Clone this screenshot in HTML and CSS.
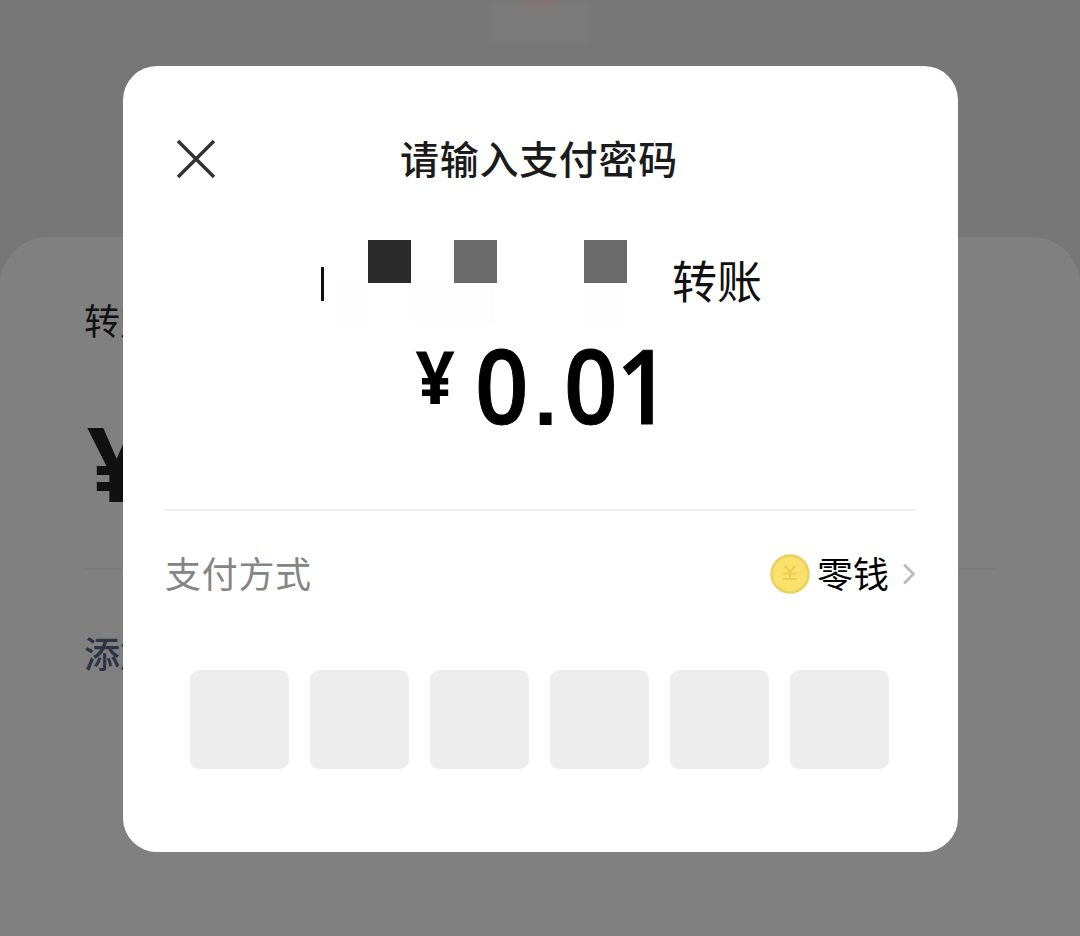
FILE: index.html
```html
<!DOCTYPE html>
<html lang="zh-CN">
<head>
<meta charset="utf-8">
<title>请输入支付密码</title>
<link rel="stylesheet" href="styles.css">
</head>
<body>
<main class="screen">
  <section class="backdrop" aria-hidden="true">
    <div class="recipient"><span class="avatar"></span></div>
    <div class="sheet">
      <div class="sheet-label">转账</div>
      <div class="sheet-amount">¥</div>
      <div class="sheet-note">添加</div>
    </div>
  </section>
  <section class="dialog" role="dialog">
    <header class="head">
      <svg class="close" viewBox="0 0 40 40"><path d="M2 2 38 38M38 2 2 38"/></svg>
      <h1 class="title">请输入支付密码</h1>
    </header>
    <div class="payee">
      <span class="stroke"></span>
      <span class="block dark"></span>
      <span class="block second"></span>
      <span class="block third"></span>
      <span class="action">转账</span>
    </div>
    <div class="amount">
      <span class="currency">¥</span>
      <span class="digit">0</span><span class="point">.</span><span class="digit zero">0</span><span class="digit one">1</span>
    </div>
    <div class="method">
      <span class="method-label">支付方式</span>
      <span class="wallet">
        <svg class="coin" viewBox="0 0 40 40"><circle cx="20" cy="20" r="18.500" fill="#fae06c" stroke="#ebd05c" stroke-width="2.500"/><path d="m15 12 5 6 5-6M13.500 19.500h13M13.500 25h13M20 18v7" fill="none" stroke="#eccb4e" stroke-width="2"/></svg>
        <span class="wallet-name">零钱</span>
        <svg class="chevron" viewBox="0 0 14 22"><path d="m2 1.500 9.500 9.500L2 20.500"/></svg>
      </span>
    </div>
    <div class="password">
      <span class="cell"></span><span class="cell"></span><span class="cell"></span><span class="cell"></span><span class="cell"></span><span class="cell"></span>
    </div>
  </section>
</main>
</body>
</html>
```
FILE: styles.css
```css
* { box-sizing: border-box; }
body {
  margin: 0;
  font-family: "Noto Sans CJK SC", sans-serif;
  color: #111;
}
.screen {
  display: grid;
  width: 1080px;
  height: 936px;
  overflow: hidden;
  background: #777;
}
.backdrop, .dialog { grid-area: 1 / 1; }
.backdrop { display: flex; flex-direction: column; }
.recipient { display: flex; justify-content: center; height: 237px; }
.avatar {
  width: 104px;
  height: 44px;
  background: radial-gradient(ellipse 30px 11px at 50% 0, #917370, #7a7a7a);
  filter: blur(3px);
}
.sheet {
  flex: 1;
  padding: 57px 84px 0;
  background: #808080;
  border-radius: 48px 48px 0 0;
}
.sheet-label { font-size: 36px; line-height: 50px; }
.sheet-amount {
  height: 225px;
  padding: 66px 0 0 3px;
  font: 700 104px/104px "Open Sans", sans-serif;
  border-bottom: 1px solid #7c7c7c;
}
.sheet-note {
  padding-top: 58px;
  font-size: 36px;
  font-weight: 500;
  line-height: 50px;
  color: #2c3344;
}
.dialog {
  width: 835px;
  height: 786px;
  margin: 66px 0 0 122.500px;
  padding: 64px 41.500px 0;
  background: #fff;
  border-radius: 34px;
}
.head {
  display: grid;
  grid-template-columns: 60px 1fr 60px;
  align-items: center;
  height: 54px;
  padding: 0 14px 0 12px;
}
.close { width: 40px; height: 40px; margin-top: 4px; }
.close path { fill: none; stroke: #333; stroke-width: 3.500; }
.title {
  margin: 0;
  text-align: center;
  font-size: 39px;
  font-weight: 500;
  line-height: 54px;
  letter-spacing: 0.700px;
  color: #1b1b1b;
}
.payee {
  display: flex;
  height: 86px;
  margin-top: 56px;
  padding-left: 157px;
  background:
    linear-gradient(#fdfdfd, #fdfdfd) 172px 46px / 32px 38px no-repeat,
    linear-gradient(#fdfdfd, #fdfdfd) 251px 46px / 80px 38px no-repeat,
    linear-gradient(#fdfdfd, #fdfdfd) 420px 46px / 40px 38px no-repeat;
}
.stroke { width: 3px; height: 34px; margin-top: 27px; background: #111; }
.block { width: 43px; height: 43px; background: #6b6b6b; }
.dark { margin-left: 44px; background: #2b2b2b; }
.second { margin-left: 43px; }
.third { margin-left: 87px; }
.action { margin: 10px 0 0 45px; font-size: 45px; line-height: 60px; }
.amount {
  display: flex;
  height: 183px;
  padding: 6px 0 0 250px;
  font: 600 104px/104px "Open Sans", sans-serif;
  color: #000;
}
.currency {
  width: 58px;
  font-size: 74px;
  font-weight: 700;
  line-height: 88px;
  transform: scaleX(0.93);
  transform-origin: 20px 50%;
}
.digit { width: 58px; transform: scaleX(0.9); -webkit-text-stroke: 1px #000; }
.point {
  width: 31px;
  font: 700 84px/129px "Liberation Sans", sans-serif;
  text-indent: 4px;
}
.zero { width: 53px; transform-origin: 29px 50%; }
.one { width: 50px; }
.method {
  display: flex;
  align-items: center;
  justify-content: space-between;
  height: 128px;
  border-top: 2px solid #f1f1f1;
}
.method-label { margin-top: -5px; padding-left: 1px; font-size: 36px; letter-spacing: 0.700px; color: #858585; }
.wallet { display: flex; align-items: center; }
.coin { width: 40px; height: 40px; }
.wallet-name { margin: -5px 13px 0 7px; font-size: 36px; color: #000; }
.chevron { width: 14px; height: 22px; }
.chevron path { fill: none; stroke: #b8b8b8; stroke-width: 2.500; }
.password {
  display: grid;
  grid-template-columns: repeat(6, 99px);
  gap: 21px;
  padding: 33px 0 0 26px;
}
.cell { height: 99px; background: #ededed; border-radius: 9px; }
```
